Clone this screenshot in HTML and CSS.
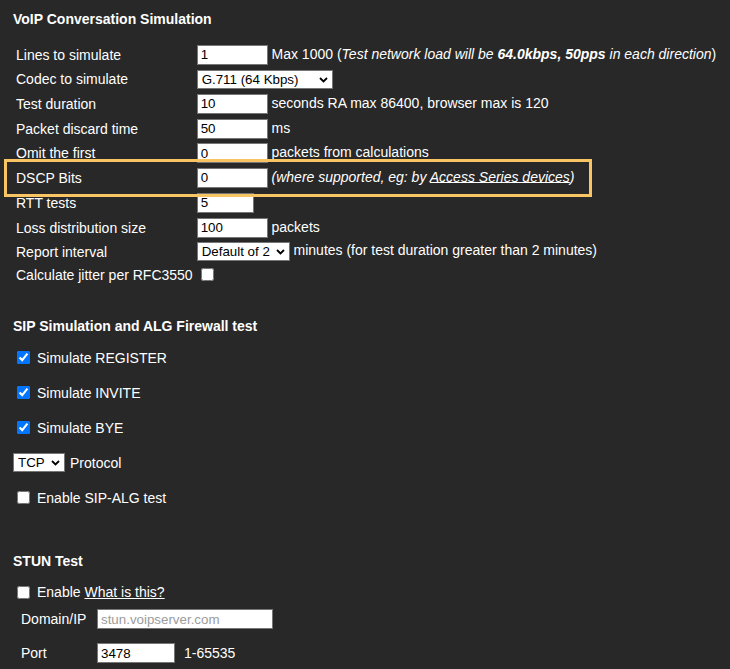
FILE: index.html
```html
<!DOCTYPE html>
<html lang="en">
<head>
<meta charset="utf-8">
<title>VoIP Conversation Simulation</title>
<link rel="stylesheet" href="styles.css">
</head>
<body>
<div class="page">
  <h3 class="sec sec-voip">VoIP Conversation Simulation</h3>
  <table class="voip">
    <tr class="r21">
      <td class="lbl">Lines to simulate</td>
      <td class="val"><input class="txt w71" type="text" value="1"> Max 1000 (<i>Test network load will be <b>64.0kbps, 50pps</b> in each direction</i>)</td>
    </tr>
    <tr class="r20">
      <td class="lbl">Codec to simulate</td>
      <td class="val"><span class="sel w136"><select><option>G.711 (64 Kbps)</option><option>G.729 (8 Kbps)</option></select><svg class="chev" width="9" height="6" viewBox="0 0 9 6"><polyline points="1,1 4.5,4.5 8,1" fill="none" stroke="#000" stroke-width="1.8"/></svg></span></td>
    </tr>
    <tr class="r21">
      <td class="lbl">Test duration</td>
      <td class="val"><input class="txt w71" type="text" value="10"> seconds RA max 86400, browser max is 120</td>
    </tr>
    <tr class="r21">
      <td class="lbl">Packet discard time</td>
      <td class="val"><input class="txt w71" type="text" value="50"> ms</td>
    </tr>
    <tr class="r20">
      <td class="lbl">Omit the first</td>
      <td class="val"><input class="txt w71" type="text" value="0"> packets from calculations</td>
    </tr>
    <tr class="r21">
      <td class="lbl">DSCP Bits</td>
      <td class="val"><input class="txt w71" type="text" value="0"> <i>(where supported, eg: by <a href="#">Access Series devices</a>)</i></td>
    </tr>
    <tr class="r21">
      <td class="lbl">RTT tests</td>
      <td class="val"><input class="txt w57" type="text" value="5"></td>
    </tr>
    <tr class="r21">
      <td class="lbl">Loss distribution size</td>
      <td class="val"><input class="txt w71" type="text" value="100"> packets</td>
    </tr>
    <tr class="r19">
      <td class="lbl">Report interval</td>
      <td class="val"><span class="sel w93"><select><option>Default of 2</option><option>1</option><option>5</option></select><svg class="chev" width="9" height="6" viewBox="0 0 9 6"><polyline points="1,1 4.5,4.5 8,1" fill="none" stroke="#000" stroke-width="1.8"/></svg></span> minutes (for test duration greater than 2 minutes)</td>
    </tr>
    <tr class="r19">
      <td class="lbl">Calculate jitter per RFC3550</td>
      <td class="val"><input class="chk" type="checkbox"></td>
    </tr>
  </table>

  <h3 class="sec sec-sip">SIP Simulation and ALG Firewall test</h3>
  <div class="sip">
    <label class="opt"><input class="chk" type="checkbox" checked><span>Simulate REGISTER</span></label>
    <label class="opt"><input class="chk" type="checkbox" checked><span>Simulate INVITE</span></label>
    <label class="opt"><input class="chk" type="checkbox" checked><span>Simulate BYE</span></label>
    <div class="opt proto"><span class="sel w52"><select><option>TCP</option><option>UDP</option></select><svg class="chev" width="9" height="6" viewBox="0 0 9 6"><polyline points="1,1 4.5,4.5 8,1" fill="none" stroke="#000" stroke-width="1.8"/></svg></span><span>Protocol</span></div>
    <label class="opt"><input class="chk" type="checkbox"><span>Enable SIP-ALG test</span></label>
  </div>

  <h3 class="sec sec-stun">STUN Test</h3>
  <div class="stun-enable"><input class="chk" type="checkbox"><span>Enable <a href="#">What is this?</a></span></div>
  <div class="stun-grid">
    <span class="slbl">Domain/IP</span>
    <input class="txt w176" type="text" placeholder="stun.voipserver.com">
    <span class="slbl">Port</span>
    <div class="port"><input class="txt w78" type="text" value="3478"><span class="range">1-65535</span></div>
  </div>

  <div class="highlight"></div>
</div>
</body>
</html>
```

FILE: styles.css
```css
html, body {
  margin: 0;
  padding: 0;
  background: #282828;
}
body {
  color: #ffffff;
  font-family: "Liberation Sans", Arial, sans-serif;
  font-size: 14px;
  line-height: 16px;
}
.page {
  position: relative;
  padding: 11px 0 20px 13px;
  min-height: 640px;
}
.sec {
  margin: 0;
  font-size: 14px;
  line-height: 16px;
  font-weight: bold;
}
.sec-voip { margin-bottom: 14px; }
.sec-sip { margin-top: 31px; margin-bottom: 6px; }
.sec-stun { margin-top: 38px; }

a { color: #ffffff; text-decoration: underline; }

/* VoIP table */
.voip {
  border-spacing: 2px;
  border-collapse: separate;
}
.voip td {
  padding: 1px;
  vertical-align: middle;
  white-space: nowrap;
}
.voip tr.r21 td { height: 21px; }
.voip tr.r20 td { height: 20px; }
.voip tr.r19 td { height: 19px; }

/* controls */
.txt {
  box-sizing: border-box;
  height: 20px;
  margin: 0;
  padding: 0 3px;
  border: 1px solid #767676;
  border-radius: 0;
  background: #ffffff;
  color: #000000;
  font-family: "Liberation Sans", Arial, sans-serif;
  font-size: 13.333px;
  vertical-align: middle;
}
.txt::placeholder { color: #9c9c9c; }
.w71 { width: 71px; }
.w57 { width: 57px; }
.w176 { width: 176px; }
.w78 { width: 78px; }

.sel {
  position: relative;
  display: inline-block;
  vertical-align: middle;
  height: 19px;
}
.sel select {
  -webkit-appearance: none;
  appearance: none;
  box-sizing: border-box;
  width: 100%;
  height: 19px;
  margin: 0;
  padding: 0 14px 0 4px;
  border: 1px solid #767676;
  border-radius: 0;
  background: #ffffff;
  color: #000000;
  font-family: "Liberation Sans", Arial, sans-serif;
  font-size: 13.333px;
  line-height: 17px;
}
.sel .chev {
  position: absolute;
  right: 5px;
  top: 7px;
  pointer-events: none;
}
.w136 { width: 136px; }
.w93 { width: 93px; }
.w52 { width: 52px; }

.chk {
  width: 13px;
  height: 13px;
  margin: 3px 3px 3px 4px;
  vertical-align: middle;
}

/* SIP block */
.sip {
  display: flex;
  flex-direction: column;
}
.opt {
  display: flex;
  align-items: center;
  gap: 4px;
  height: 35px;
}
.proto { gap: 5px; }

/* STUN block */
.stun-enable {
  display: flex;
  align-items: center;
  gap: 4px;
  height: 18px;
  margin-top: 14px;
}
.stun-grid {
  display: grid;
  grid-template-columns: 66px auto;
  column-gap: 10px;
  row-gap: 14px;
  align-items: center;
  justify-items: start;
  margin-top: 8px;
  margin-left: 8px;
}
.port {
  display: flex;
  align-items: center;
}
.range { margin-left: 9px; }

/* annotation overlay */
.highlight {
  position: absolute;
  left: 4px;
  top: 159px;
  width: 588px;
  height: 38px;
  box-sizing: border-box;
  border: 3px solid #f9c464;
  pointer-events: none;
}
```
